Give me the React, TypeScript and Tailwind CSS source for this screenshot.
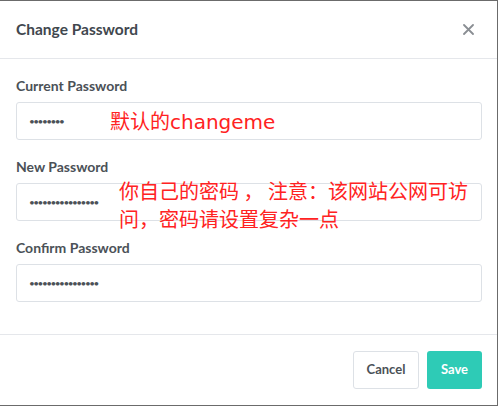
export default function App() {
  return (
    <div className="w-[499px] h-[406px] bg-white" style={{ fontFamily: "Lato, 'Noto Sans', sans-serif" }}>
      <div className="relative w-[498px] h-[406px] border-t border-r border-b border-[#6b6b6b] flex flex-col">
        {/* header */}
        <div className="h-[58px] flex items-center justify-between pl-4 pr-[23px] border-b border-[#e5e7eb]">
          <h2 className="text-[15.5px] font-bold text-[#41474e]">Change Password</h2>
          <svg width="11" height="11" viewBox="0 0 11 11" className="text-[#8a8e93]">
            <path d="M1 1 L10 10 M10 1 L1 10" stroke="currentColor" strokeWidth="1.8" strokeLinecap="round" />
          </svg>
        </div>

        {/* body */}
        <div className="px-4 pt-[17px] pb-[32px] flex flex-col gap-[17px] border-b border-[#e5e7eb]">
          {[
            { label: "Current Password", dots: "••••••••" },
            { label: "New Password", dots: "••••••••••••••••" },
            { label: "Confirm Password", dots: "••••••••••••••••" },
          ].map((f, i) => (
            <div key={i} className="flex flex-col">
              <label className="h-5 mb-[6px] text-[14px] leading-5 font-bold text-[#4b5157]">{f.label}</label>
              <div className="h-[38px] w-[466px] border border-[#dde1e6] rounded-[3px] flex items-center pl-3 text-[10px] tracking-[-1.5px] text-[#4b5157]">
                {f.dots}
              </div>
            </div>
          ))}
        </div>

        {/* footer */}
        <div className="flex justify-end gap-2 pt-4 pr-[15px]">
          <button className="w-[66px] h-[38px] border border-[#dde1e6] rounded-[3px] text-[13px] font-bold text-[#4b5157]">
            Cancel
          </button>
          <button className="w-[55px] h-[38px] rounded-[3px] bg-[#2ecbb6] text-[13px] font-bold text-white">
            Save
          </button>
        </div>

        {/* red annotations */}
        <div
          className="absolute left-[110px] top-[106px] text-[20px] leading-[28px] text-[#ff2222]"
          style={{ fontFamily: "'DejaVu Sans', 'Noto Sans CJK SC', sans-serif" }}
        >
          <span style={{ fontFamily: "'Noto Sans CJK SC', sans-serif" }}>默认的</span>changeme
        </div>
        <div
          className="absolute left-[119px] top-[176px] w-[370px] text-[20px] leading-[28px] text-[#ff2222]"
          style={{ fontFamily: "'Noto Sans CJK SC', sans-serif" }}
        >
          你自己的密码 ， 注意：该网站公网可访
          <br />
          问，密码请设置复杂一点
        </div>
      </div>
    </div>
  )
}
